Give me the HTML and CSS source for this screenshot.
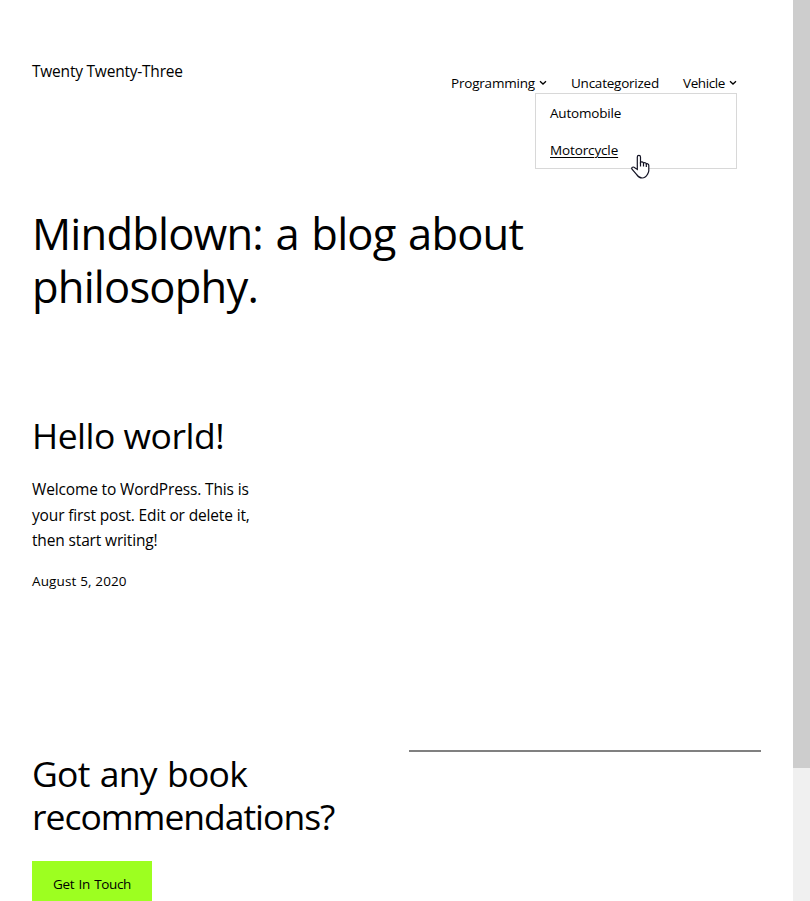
FILE: index.html
```html
<!DOCTYPE html>
<html lang="en">
<head>
<meta charset="utf-8">
<title>Twenty Twenty-Three</title>
<link rel="stylesheet" href="styles.css">
</head>
<body>
<div class="window">
  <div class="page">
    <header class="site-header">
      <a class="site-title">Twenty Twenty-Three</a>
      <nav class="nav">
        <a class="nav-item"><span class="programming">Programming</span><svg class="caret" viewBox="0 0 8 6"><path d="M1 1.3 4 4.1 7 1.3"/></svg></a>
        <a class="nav-item"><span class="uncategorized">Uncategorized</span></a>
        <div class="nav-item"><span class="vehicle">Vehicle</span><svg class="caret" viewBox="0 0 8 6"><path d="M1 1.3 4 4.1 7 1.3"/></svg>
          <div class="submenu">
            <a class="automobile">Automobile</a>
            <a class="motorcycle">Motorcycle</a>
            <svg class="cursor" viewBox="0 0 20 26"><path d="M6.3 15.4V3.1c0-2.2 3.2-2.2 3.2 0v5.3c.7-.8 2.5-.7 3 .7 1-.7 2.5-.4 2.8.8 1.1-.5 2.5.1 2.5 1.6v5.2c0 1.3-.7 2.5-1.3 3.6-1.2 2.3-2.7 3.7-5.4 3.7-2.8 0-4.2-1.5-5.6-3.6L1 15.2c-.9-1.5.7-2.7 2-1.9Z"/><path d="M9.5 8v4.5M12.5 9v3.5M15.3 9.8V13"/></svg>
          </div>
        </div>
      </nav>
    </header>
    <main>
      <h1 class="hero">Mindblown: a blog about<br>philosophy.</h1>
      <article class="post">
        <h2 class="post-title">Hello world!</h2>
        <p class="excerpt"><span class="line-one">Welcome to WordPress. This is</span><br><span class="line-two">your first post. Edit or delete it,</span><br><span class="line-three">then start writing!</span></p>
        <time class="date">August 5, 2020</time>
      </article>
      <section class="contact">
        <div class="contact-main">
          <h2 class="contact-title">Got any book<br><span class="contact-second">recommendations?</span></h2>
          <a class="button">Get In Touch</a>
        </div>
        <hr class="separator">
      </section>
    </main>
  </div>
  <div class="scrollbar"><div class="thumb"></div></div>
</div>
</body>
</html>
```
FILE: styles.css
```css
* { box-sizing: border-box; }
body { margin: 0; background: #fff; color: #000; font: 15.5px/1.6 "Open Sans", "Noto Sans", sans-serif; }
h1, h2, p { margin: 0; font-weight: 400; }
.window { display: flex; height: 901px; overflow: hidden; }
.page { flex: 1; height: 901px; overflow: hidden; padding: 58px 32px 0; }
.scrollbar { width: 17px; background: #f0f0f0; }
.thumb { height: 768px; background: #cdcdcd; }
.site-header { display: flex; justify-content: space-between; align-items: flex-start; height: 149px; }
.site-title { line-height: 26px; letter-spacing: -.22px; }
.nav { display: flex; gap: 24px; padding: 14px 24px 0 0; font-size: 13.5px; line-height: 22px; }
.nav-item { display: flex; align-items: center; position: relative; }
.programming { width: 84px; letter-spacing: -.2px; }
.uncategorized { width: 88px; letter-spacing: -.24px; }
.vehicle { width: 42px; letter-spacing: -.4px; }
.automobile { letter-spacing: -.2px; }
.caret { width: 8px; height: 6px; margin-left: 4px; fill: none; stroke: #000; stroke-width: 1.3; }
.submenu { position: absolute; top: 21px; right: 0; width: 202px; height: 76px; padding: 8px 14px; border: 1px solid #d8d8d8; background: #fff; display: flex; flex-direction: column; align-items: flex-start; gap: 15px; }
.motorcycle { letter-spacing: -.13px; text-decoration: underline; text-underline-offset: 2px; text-decoration-thickness: 1px; }
.cursor { position: absolute; left: 95px; top: 60px; width: 20px; height: 26px; fill: #fff; stroke: #111122; stroke-width: 1.2; }
.hero { font-size: 43.5px; line-height: 53px; height: 207px; letter-spacing: -.8px; word-spacing: 2px; }
.post { height: 336px; }
.post-title { font-size: 35.5px; line-height: 43px; margin-bottom: 20px; letter-spacing: -.5px; }
.excerpt { height: 76px; line-height: 25.6px; letter-spacing: -.15px; }
.date { display: block; margin-top: 17px; font-size: 13.5px; line-height: 22px; letter-spacing: .14px; }
.contact { display: grid; grid-template-columns: 352px 352px; column-gap: 25px; }
.contact-title { font-size: 35.5px; line-height: 43px; margin: 2px 0 23px; letter-spacing: -.7px; word-spacing: 1.5px; }
.contact-second { letter-spacing: -1.02px; }
.button { display: flex; align-items: center; justify-content: center; width: 120px; height: 46px; padding-top: 1px; background: #9dff20; font-size: 13.5px; letter-spacing: -.35px; word-spacing: 1.2px; }
.separator { width: 352px; height: 2px; margin: 0; border: 0; background: #808080; align-self: start; }
```
